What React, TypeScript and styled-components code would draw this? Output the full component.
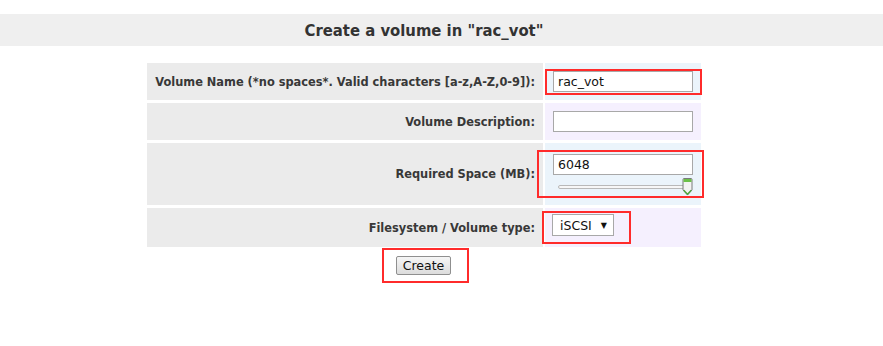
import React from "react";
import styled, { createGlobalStyle } from "styled-components";

const Global = createGlobalStyle`
  html, body { margin: 0; padding: 0; background: #fff; }
  body { font-family: "DejaVu Sans", Verdana, sans-serif; color: #333; }
`;

const Page = styled.div`
  width: 883px;
  padding-top: 14px;
`;

const TitleBar = styled.div`
  background: #efefef;
  height: 32px;
  display: flex;
  align-items: center;
`;

const Title = styled.h2`
  margin: 0;
  width: 848px;
  text-align: center;
  font-family: "DejaVu Sans Condensed", "DejaVu Sans", sans-serif;
  font-stretch: condensed;
  font-weight: bold;
  font-size: 16.5px;
  color: #333;
`;

const Content = styled.div`
  width: 848px;
  display: flex;
  flex-direction: column;
  align-items: center;
  padding-top: 14px;
`;

const FormTable = styled.table`
  border-collapse: separate;
  border-spacing: 2px 3px;
  table-layout: fixed;
  width: 558px;
  margin: 0;
`;

const Label = styled.th<{ $h: number }>`
  background: #ebebeb;
  width: 396px;
  height: ${(p) => p.$h}px;
  padding: 0 8px 0 0;
  box-sizing: border-box;
  text-align: right;
  font-size: 11.4px;
  font-weight: bold;
  color: #383838;
  white-space: nowrap;
`;

const Value = styled.td<{ $tint: "blue" | "lilac" }>`
  background: ${(p) => (p.$tint === "blue" ? "#ebf4fb" : "#f5f0fe")};
  width: 156px;
  padding: 0;
  vertical-align: middle;
  white-space: nowrap;
`;

const Mark = styled.div<{ $pad: string; $ml: number }>`
  display: inline-flex;
  flex-direction: column;
  border: 2px solid #ff2b2b;
  padding: ${(p) => p.$pad};
  margin-left: ${(p) => p.$ml}px;
  box-sizing: border-box;
  vertical-align: middle;
`;

const TextInput = styled.input`
  width: 140px;
  height: 21px;
  box-sizing: border-box;
  border: 1px solid #a8a8a8;
  background: #fff;
  padding: 0 4px;
  font-family: "DejaVu Sans", Verdana, sans-serif;
  font-size: 12.5px;
  color: #111;
  outline: none;
`;

const Plain = styled.div`
  padding-left: 8px;
`;

const SliderBox = styled.div`
  position: relative;
  width: 140px;
  height: 20px;
`;

const Track = styled.div`
  position: absolute;
  left: 5px;
  right: 4px;
  top: 10px;
  height: 2px;
  border: 1px solid #b9b9b9;
  border-radius: 2px;
  background: #f7f7f7;
`;

const Thumb = styled.svg`
  position: absolute;
  right: 0;
  top: 3px;
`;

const Select = styled.div`
  display: inline-flex;
  align-items: center;
  gap: 9px;
  height: 22px;
  box-sizing: border-box;
  padding: 0 6px 0 7px;
  border: 1px solid #a8a8a8;
  background: #fff;
  font-size: 12.5px;
  color: #111;
`;

const Arrow = styled.span`
  font-size: 8px;
`;

const ButtonMark = styled.div`
  margin-top: -2px;
  border: 2px solid #ff2b2b;
  padding: 5px 16px 6px 12px;
  margin-left: 3px;
`;

const Button = styled.button`
  height: 19px;
  width: 55px;
  padding: 0;
  border: 1px solid #8f8f8f;
  border-radius: 2px;
  background: linear-gradient(#f6f6f6, #dcdcdc);
  font-family: "DejaVu Sans", Verdana, sans-serif;
  font-size: 12.5px;
  color: #111;
`;

export default function App() {
  return (
    <Page>
      <Global />
      <TitleBar>
        <Title>Create a volume in "rac_vot"</Title>
      </TitleBar>
      <Content>
        <FormTable>
          <tbody>
            <tr>
              <Label $h={37}>Volume Name (*no spaces*. Valid characters [a-z,A-Z,0-9]):</Label>
              <Value $tint="blue">
                <Mark $pad="0 7px 1px 6px" $ml={0}>
                  <TextInput defaultValue="rac_vot" />
                </Mark>
              </Value>
            </tr>
            <tr>
              <Label $h={37}>Volume Description:</Label>
              <Value $tint="lilac">
                <Plain>
                  <TextInput defaultValue="" />
                </Plain>
              </Value>
            </tr>
            <tr>
              <Label $h={62}>Required Space (MB):</Label>
              <Value $tint="blue">
                <Mark $pad="2px 9px 1px 14px" $ml={-8}>
                  <TextInput defaultValue="6048" />
                  <SliderBox>
                    <Track />
                    <Thumb width="11" height="18" viewBox="0 0 11 18">
                      <path d="M1 1.5 Q1 0.5 2 0.5 L9 0.5 Q10 0.5 10 1.5 L10 12 L5.5 17 L1 12 Z" fill="#f3f3f3" stroke="#7a7a7a" strokeWidth="1" />
                      <rect x="1.5" y="1" width="8" height="3" fill="#6cc04a" />
                      <path d="M1.8 12.2 L5.5 16.2 L9.2 12.2" fill="none" stroke="#4aa83a" strokeWidth="1.3" />
                    </Thumb>
                  </SliderBox>
                </Mark>
              </Value>
            </tr>
            <tr>
              <Label $h={39}>Filesystem / Volume type:</Label>
              <Value $tint="lilac">
                <Mark $pad="1px 15px 6px 8px" $ml={-3}>
                  <Select>
                    iSCSI <Arrow>▼</Arrow>
                  </Select>
                </Mark>
              </Value>
            </tr>
          </tbody>
        </FormTable>
        <ButtonMark>
          <Button>Create</Button>
        </ButtonMark>
      </Content>
    </Page>
  );
}
